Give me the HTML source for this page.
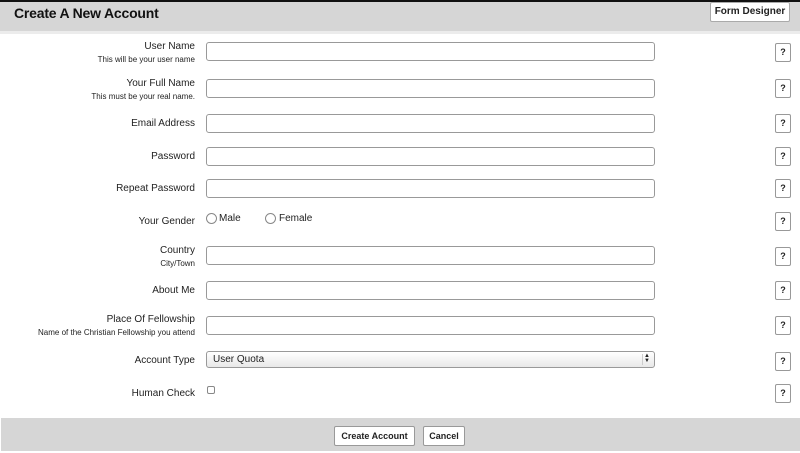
<!DOCTYPE html>
<html><head><meta charset="utf-8"><style>
*{margin:0;padding:0;box-sizing:border-box}
body{width:800px;height:453px;background:#fff;font-family:"Liberation Sans",sans-serif;position:relative;overflow:hidden;color:#222}
.a{position:absolute}
.top{left:0;top:0;width:800px;height:2px;background:#111}
.hdr{left:0;top:2px;width:800px;height:29px;background:#d6d6d6}
.strip{left:0;top:31px;width:800px;height:3px;background:#ececec}
.title{left:14px;top:5px;font-size:14px;font-weight:bold;color:#111;letter-spacing:-0.2px}
.fd{left:710px;top:2px;width:80px;height:20px;background:#fff;border:1px solid #aaa;border-radius:2px;font-size:10px;font-weight:bold;text-align:center;line-height:18px}
.lbl{right:605px;font-size:10px;text-align:right;white-space:nowrap;color:#222}
.sub{right:605px;font-size:8px;text-align:right;white-space:nowrap;color:#222}
.in{left:206px;width:449px;height:19px;border:1px solid #999;border-radius:3px;background:#fff}
.q{left:775px;width:16px;height:19px;border:1px solid #999;border-radius:2px;background:#fff;font-size:9px;font-weight:bold;text-align:center;line-height:17px}
.radio{width:11px;height:11px;border:1px solid #888;border-radius:50%;background:#fff}
.ft{left:1px;top:418px;width:799px;height:33px;background:#d6d6d6}
.btn{height:20px;top:426px;background:#fff;border:1px solid #999;border-radius:2px;font-size:9px;font-weight:bold;text-align:center;line-height:18px}
</style></head><body>
<div class="a top"></div><div class="a hdr"></div><div class="a strip"></div>
<div class="a title">Create A New Account</div>
<div class="a fd">Form Designer</div>

<div class="a lbl" style="top:41px">User Name</div>
<div class="a sub" style="top:55px">This will be your user name</div>
<div class="a in" style="top:42px"></div>
<div class="a q" style="top:43px">?</div>

<div class="a lbl" style="top:78px">Your Full Name</div>
<div class="a sub" style="top:92px">This must be your real name.</div>
<div class="a in" style="top:79px"></div>
<div class="a q" style="top:79px">?</div>

<div class="a lbl" style="top:118px">Email Address</div>
<div class="a in" style="top:114px"></div>
<div class="a q" style="top:114px">?</div>

<div class="a lbl" style="top:151px">Password</div>
<div class="a in" style="top:147px"></div>
<div class="a q" style="top:147px">?</div>

<div class="a lbl" style="top:183px">Repeat Password</div>
<div class="a in" style="top:179px"></div>
<div class="a q" style="top:179px">?</div>

<div class="a lbl" style="top:216px">Your Gender</div>
<div class="a radio" style="left:206px;top:213px"></div>
<div class="a" style="left:219px;top:213px;font-size:10px">Male</div>
<div class="a radio" style="left:265px;top:213px"></div>
<div class="a" style="left:279px;top:213px;font-size:10px">Female</div>
<div class="a q" style="top:212px">?</div>

<div class="a lbl" style="top:245px">Country</div>
<div class="a sub" style="top:259px">City/Town</div>
<div class="a in" style="top:246px"></div>
<div class="a q" style="top:247px">?</div>

<div class="a lbl" style="top:285px">About Me</div>
<div class="a in" style="top:281px"></div>
<div class="a q" style="top:281px">?</div>

<div class="a lbl" style="top:314px">Place Of Fellowship</div>
<div class="a sub" style="top:328px">Name of the Christian Fellowship you attend</div>
<div class="a in" style="top:316px"></div>
<div class="a q" style="top:316px">?</div>

<div class="a lbl" style="top:355px">Account Type</div>
<div class="a in" style="top:351px;height:17px;background:linear-gradient(#fff,#e8e8e8);font-size:10px;padding-left:6px;line-height:15px">User Quota
<div class="a" style="right:3px;top:2px;width:9px;height:11px;border-left:1px solid #ccc;font-size:6px;line-height:5px;text-align:center">▲<br>▼</div></div>
<div class="a q" style="top:352px">?</div>

<div class="a lbl" style="top:388px">Human Check</div>
<div class="a" style="left:207px;top:386px;width:8px;height:8px;border:1px solid #888;border-radius:2px"></div>
<div class="a q" style="top:384px">?</div>

<div class="a ft"></div>
<div class="a btn" style="left:334px;width:81px">Create Account</div>
<div class="a btn" style="left:423px;width:42px">Cancel</div>
</body></html>
